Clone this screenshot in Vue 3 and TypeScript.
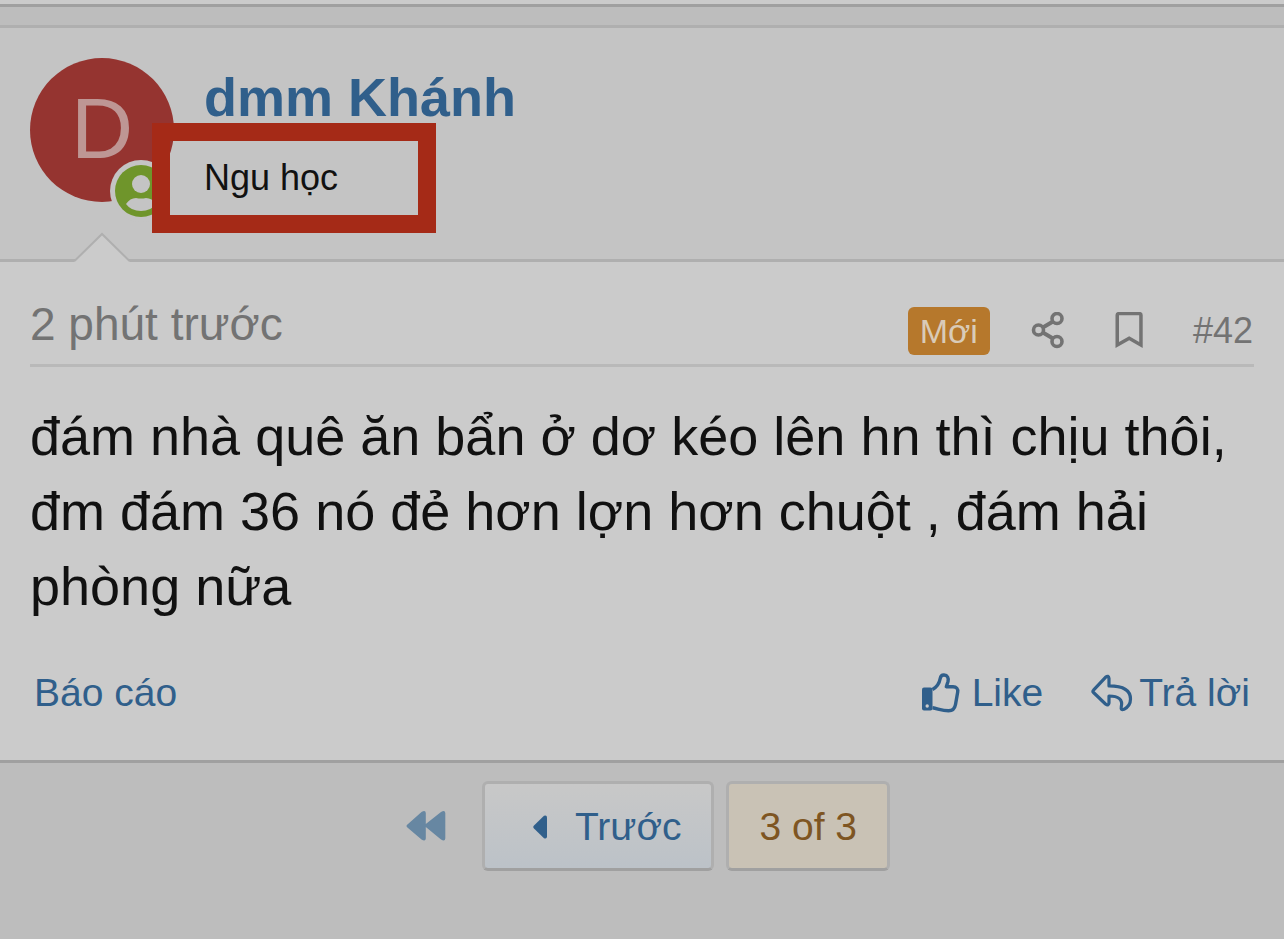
<script setup lang="ts">
import { ref } from 'vue'

const post = {
  author: 'dmm Khánh',
  initial: 'D',
  title: 'Ngu học',
  time: '2 phút trước',
  number: '#42',
  body: 'đám nhà quê ăn bẩn ở dơ kéo lên hn thì chịu thôi, đm đám 36 nó đẻ hơn lợn hơn chuột , đám hải phòng nữa',
}
const bookmarked = ref(false)
</script>

<template>
  <div class="page">
    <div class="previous"></div>
    <article class="post">
      <header class="user">
        <a href="#" class="avatar">
          <span class="initial">{{ post.initial }}</span>
          <svg class="online" viewBox="0 0 62 62" aria-hidden="true">
            <circle cx="31" cy="31" r="31" fill="#c4c4c4" />
            <circle cx="31" cy="31" r="26" fill="#6f952b" />
            <circle cx="31" cy="24" r="9" fill="#c4c4c4" />
            <path d="M16 44Q20 38 26 38Q31 39 36 38Q42 38 46 44Q41 51 31 51Q21 51 16 44Z" fill="#c4c4c4" />
          </svg>
        </a>
        <div class="identity">
          <h4 class="name"><a href="#">{{ post.author }}</a></h4>
          <h5 class="title">{{ post.title }}</h5>
          <div class="highlight"></div>
        </div>
        <svg class="arrow" viewBox="0 0 60 30" aria-hidden="true">
          <path d="M2 30L30 2L58 30Z" fill="#cbcbcb" />
          <path d="M0 28.500H3L30 2L57 28.500H60" fill="none" stroke="#afafaf" stroke-width="2" />
        </svg>
      </header>

      <div class="content">
        <div class="attribution">
          <a href="#" class="time"><time>{{ post.time }}</time></a>
          <div class="tools">
            <span class="new">Mới</span>
            <button type="button" class="icon-button" aria-label="Chia sẻ">
              <svg width="34" height="38" viewBox="0 0 34 38" fill="none" stroke="#737373" stroke-width="3.600">
                <path d="M11 16L22 9.500M11 20L22 26.500" stroke-width="4" />
                <circle cx="7.500" cy="18" r="5" />
                <circle cx="26" cy="6.500" r="5" />
                <circle cx="26" cy="29.500" r="5" />
              </svg>
            </button>
            <button
              type="button"
              class="icon-button"
              aria-label="Đánh dấu"
              :aria-pressed="bookmarked"
              @click="bookmarked = !bookmarked"
            >
              <svg width="28" height="38" viewBox="0 1 28 38">
                <path
                  d="M3.500 0.900H24.500A3.200 3.200 0 0 1 27.700 4.100V37L14.200 29.300L0.500 37V4.100A3.200 3.200 0 0 1 3.500 0.900ZM4 4.200V31L14.200 25.300L24.200 31V4.200Z"
                  fill="#737373"
                  fill-rule="evenodd"
                />
              </svg>
            </button>
            <a href="#" class="number">{{ post.number }}</a>
          </div>
        </div>

        <p class="body">{{ post.body }}</p>

        <footer class="actions">
          <a href="#">Báo cáo</a>
          <div class="right">
            <a href="#" class="like">
              <svg width="38" height="40" viewBox="0 0 38 40" aria-hidden="true">
                <path
                  d="M10.500 16.500C15 14 17.500 9.500 18.200 5.500C18.700 2.700 20.200 1.900 22 2C25.500 2.200 26.800 5 26 8.500L24.300 13.700H31C34.500 13.700 36.200 16 35.700 19L33.500 31.500C32.800 35.500 30.500 37.800 26.500 37.800C20 37.800 15.500 35.500 10.500 34.800"
                  fill="none" stroke="#305f8b" stroke-width="3.400" stroke-linejoin="round"
                />
                <path d="M2 14.500H8.500Q10.500 14.500 10.500 16.500V35Q10.500 37.500 8.500 37.500H2Q0 37.500 0 35.500V16.500Q0 14.500 2 14.500Z" fill="#305f8b" />
                <circle cx="5.200" cy="33" r="1.700" fill="#cbcbcb" />
              </svg>
              <span>Like</span>
            </a>
            <a href="#" class="reply">
              <svg width="42" height="38" viewBox="0 0 42 38" aria-hidden="true">
                <path
                  d="M2.500 16.200L14.500 3.300Q17.600 0.800 18 4.500V11.900C31 11.900 39.500 15.500 39.500 25C39.500 30 36.500 33.500 33 35.300Q29.500 36.500 30.300 32.700C32 25.500 27.500 22 18 22V29Q17.500 32.400 14.500 30L2.500 18.500Q1.200 17.400 2.500 16.200Z"
                  fill="none" stroke="#305f8b" stroke-width="3.200" stroke-linejoin="round"
                />
              </svg>
              <span>Trả lời</span>
            </a>
          </div>
        </footer>
      </div>
    </article>

    <nav class="pager" aria-label="Phân trang">
      <a href="#" class="first" aria-label="Trang đầu">
        <svg width="40" height="32" viewBox="0 0 40 32">
          <path d="M2 14L15.500 2Q19.500 -0.500 19.800 3V14L35 2Q39 -0.500 39.300 3V28.500Q39 32 35 29.500L19.800 17V28.500Q19.500 32 15.500 29.500L2 18Q-1 16 2 14Z" fill="#6787a2" />
        </svg>
      </a>
      <a href="#" class="page-button">
        <svg width="14" height="24" viewBox="0 0 14 24" aria-hidden="true">
          <path d="M1 10.500L11 0.800Q13.800 -0.500 14 2.500V21.500Q13.800 24.500 11 23.200L1 13.500Q-0.500 12 1 10.500Z" fill="#305f8b" />
        </svg>
        <span>Trước</span>
      </a>
      <button type="button" class="page-button current">3 of 3</button>
    </nav>
  </div>
</template>

<style>
body {
  margin: 0;
  background: #bdbdbd;
}
</style>

<style scoped>
.page {
  min-height: 100vh;
  background: #bdbdbd;
  color: #111;
  font-family: "Liberation Sans", Arial, sans-serif;
  font-size: 39px;
  line-height: 46px;
}
a {
  color: #305f8b;
  text-decoration: none;
}
svg {
  display: block;
  flex: none;
}
h4,
h5,
p {
  margin: 0;
}
button {
  font: inherit;
  cursor: pointer;
}
.previous {
  height: 4px;
  background: #cbcbcb;
  border-bottom: 3px solid #a0a0a0;
}
.post {
  margin-top: 18px;
  border-top: 3px solid #afafaf;
  border-bottom: 3px solid #a0a0a0;
  background: #cbcbcb;
}
.user {
  position: relative;
  display: flex;
  gap: 30px;
  padding: 30px 30px 57px;
  background: #c4c4c4;
  border-bottom: 3px solid #afafaf;
}
.avatar {
  position: relative;
  display: flex;
  justify-content: center;
  align-items: flex-start;
  flex: none;
  width: 144px;
  height: 144px;
  border-radius: 50%;
  background: #953430;
}
.initial {
  color: #be9694;
  font-size: 86px;
  line-height: 140px;
}
.online {
  position: absolute;
  left: 80px;
  top: 102px;
  width: 62px;
  height: 62px;
}
.identity {
  position: relative;
  padding-top: 8px;
}
.name {
  font-size: 54px;
  line-height: 62px;
}
.title {
  margin-top: 29px;
  font-size: 36px;
  font-weight: 400;
  line-height: 42px;
}
.highlight {
  position: absolute;
  left: -52px;
  top: 65px;
  width: 248px;
  height: 74px;
  border: 18px solid #a52a17;
  pointer-events: none;
}
.arrow {
  position: absolute;
  left: 72px;
  bottom: -3px;
  width: 60px;
  height: 30px;
}
.content {
  padding: 0 30px;
}
.attribution {
  display: flex;
  justify-content: space-between;
  padding: 36px 0 9px;
  border-bottom: 3px solid #b9b9b9;
}
.time {
  color: #737373;
  font-size: 46px;
  line-height: 52px;
}
.tools {
  display: flex;
  align-items: center;
  gap: 41px;
  height: 48px;
  margin-top: 9px;
  padding-right: 1px;
}
.new {
  padding: 0 12px;
  border-radius: 6px;
  background: #b6782c;
  color: #d9cbb8;
  font-size: 34px;
  line-height: 48px;
}
.icon-button {
  margin: 0;
  padding: 0;
  border: 0;
  background: none;
}
.icon-button + .icon-button {
  margin: 0 9px;
}
.number {
  color: #737373;
  font-size: 36px;
}
.body {
  padding-top: 32px;
  font-size: 54px;
  line-height: 75px;
}
.actions {
  display: flex;
  justify-content: space-between;
  padding: 46px 4px 44px;
}
.right,
.like,
.reply {
  display: flex;
  align-items: center;
}
.right {
  gap: 48px;
}
.like {
  gap: 12px;
}
.reply {
  gap: 6px;
}
.pager {
  display: flex;
  justify-content: center;
  align-items: center;
  gap: 12px;
  padding: 18px 0 18px 12px;
}
.first {
  margin-right: 24px;
}
.page-button {
  display: flex;
  align-items: center;
  gap: 28px;
  box-sizing: border-box;
  height: 90px;
  padding: 2px 30px 0 48px;
  border: 3px solid #afafaf;
  border-bottom-color: #a0a0a0;
  border-radius: 6px;
  background: linear-gradient(#c8c8c8, #bcc2c8);
}
.current {
  padding: 2px 30px 0;
  background: #c9c2b5;
  color: #7e5522;
}
</style>
